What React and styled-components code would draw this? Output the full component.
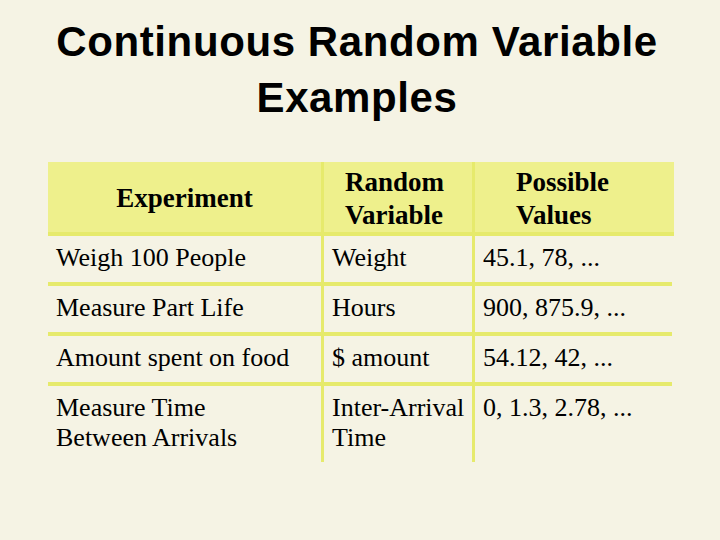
import React from "react";
import styled, { createGlobalStyle } from "styled-components";

const Global = createGlobalStyle`
  html, body { margin: 0; padding: 0; background: #f5f3e4; }
  body { width: 720px; height: 540px; overflow: hidden; }
`;

const Page = styled.div`
  width: 720px;
  height: 540px;
  background: #f5f3e4;
  padding-top: 14px;
  box-sizing: border-box;
`;

const Title = styled.h1`
  margin: 0;
  padding-right: 6px;
  font-family: "Liberation Sans", Arial, sans-serif;
  font-weight: bold;
  font-size: 42px;
  line-height: 56px;
  letter-spacing: 0.6px;
  text-align: center;
  color: #000;
`;

const Table = styled.div`
  margin: 36px 0 0 48px;
  width: 626px;
`;

const Row = styled.div`
  display: grid;
  grid-template-columns: 276px 151px 199px;
  width: ${(p) => (p.$header ? "626px" : "624px")};
  min-height: ${(p) => p.$h}px;
  background: ${(p) => (p.$header ? "#eef08c" : "transparent")};
  border-bottom: ${(p) => (p.$last ? "none" : "4px solid #e6ea6c")};
`;

const Cell = styled.div`
  box-sizing: border-box;
  border-right: ${(p) => (p.$sep ? "3px solid #e6ea6c" : "none")};
  padding: 7px 0 0 8px;
  font-family: "Liberation Serif", "Times New Roman", serif;
  font-size: 26px;
  line-height: 30px;
  color: #000;
`;

const HeadCell = styled.div`
  box-sizing: border-box;
  border-right: ${(p) => (p.$sep ? "3px solid #e6ea6c" : "none")};
  display: flex;
  align-items: center;
  justify-content: ${(p) => (p.$center ? "center" : "flex-start")};
  padding: 3px 0 0 ${(p) => p.$pl || 0}px;
  font-family: "Liberation Serif", "Times New Roman", serif;
  font-weight: bold;
  font-size: 27px;
  line-height: 33px;
  color: #000;
`;

const rows = [
  ["Weigh 100 People", "Weight", "45.1, 78, ..."],
  ["Measure Part Life", "Hours", "900, 875.9, ..."],
  ["Amount spent on food", "$ amount", "54.12, 42, ..."],
  [["Measure Time", "Between Arrivals"], ["Inter-Arrival", "Time"], "0, 1.3, 2.78, ..."],
];

const render = (v) =>
  Array.isArray(v) ? v.map((l, i) => <div key={i}>{l}</div>) : v;

export default function App() {
  return (
    <Page>
      <Global />
      <Title>
        Continuous Random Variable
        <br />
        Examples
      </Title>
      <Table>
        <Row $header $h={70}>
          <HeadCell $sep $center>
            Experiment
          </HeadCell>
          <HeadCell $sep $pl={21}>
            <div>
              Random
              <br />
              Variable
            </div>
          </HeadCell>
          <HeadCell $pl={41}>
            <div>
              Possible
              <br />
              Values
            </div>
          </HeadCell>
        </Row>
        {rows.map((r, i) => {
          const last = i === rows.length - 1;
          return (
            <Row key={i} $h={last ? 76 : 46} $last={last}>
              <Cell $sep>{render(r[0])}</Cell>
              <Cell $sep>{render(r[1])}</Cell>
              <Cell>{render(r[2])}</Cell>
            </Row>
          );
        })}
      </Table>
    </Page>
  );
}
